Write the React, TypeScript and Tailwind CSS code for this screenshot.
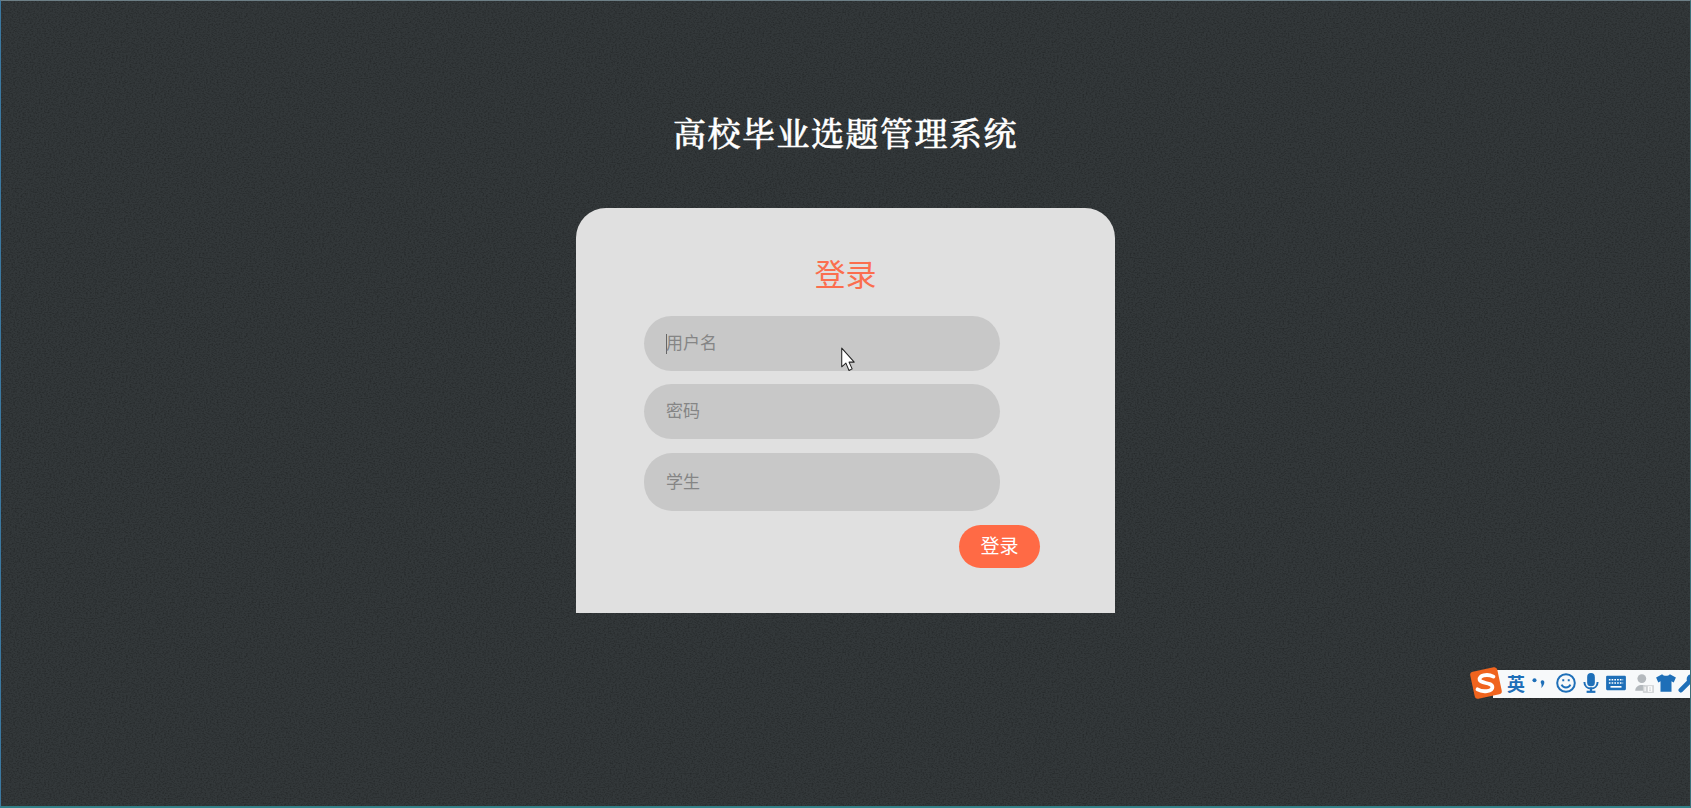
import React from 'react';

const fields = [
  { label: '用户名', height: 'h-[55px] mb-[-1px]', caret: true, shift: 'pt-0' },
  { label: '密码', height: 'h-[55px]', caret: false, shift: 'pt-0' },
  { label: '学生', height: 'h-[58px]', caret: false, shift: 'pt-[2px]' },
];

const Toolbar: React.FC = () => (
  <div className="absolute left-[1468px] top-[664px] flex h-[36px] w-[223px] items-center overflow-hidden">
    <div className="absolute left-[24px] top-[5px] h-[28px] w-[199px] bg-[#f7f9fa] shadow-sm" />
    <svg viewBox="0 0 32 32" className="relative h-[34px] w-[34px] shrink-0">
      <rect x="3" y="3" width="26" height="26" rx="3" fill="#f0641e" transform="rotate(-12 16 16)" />
      <path d="M23 10 C17 7 9 9 10 13 C11 17 22 15 22 20 C22 24 13 25 8 22" fill="none" stroke="#fff" strokeWidth="3.6" strokeLinecap="round" />
    </svg>
    <span className="relative ml-[4px] w-[20px] shrink-0 font-['Noto_Sans_CJK_SC',sans-serif] text-[18px] leading-none font-bold text-[#1e6fb8]">英</span>
    <svg viewBox="0 0 16 16" className="relative ml-[3px] h-[18px] w-[18px] shrink-0 text-[#1e6fb8]" fill="currentColor">
      <circle cx="4" cy="5.500" r="1.800" />
      <path d="M11 5.500 C13.500 5.500 13.500 9 10 12.500 C11 9 9.500 8 9.500 7 C9.500 6 10.500 5.500 11 5.500Z" />
    </svg>
    <svg viewBox="0 0 20 20" className="relative ml-[7px] h-[22px] w-[22px] shrink-0 text-[#1e6fb8]" fill="none" stroke="currentColor" strokeWidth="1.800">
      <circle cx="10" cy="10" r="8" />
      <path d="M6 11.500 C7.500 15 12.500 15 14 11.500" />
      <path d="M7.500 6.500 V8.500 M12.500 6.500 V8.500" />
    </svg>
    <svg viewBox="0 0 20 20" className="relative ml-[3px] h-[22px] w-[22px] shrink-0 text-[#1e6fb8]" fill="currentColor">
      <rect x="6.500" y="1" width="7" height="12" rx="3.500" />
      <path d="M4 9 C4 17 16 17 16 9" fill="none" stroke="currentColor" strokeWidth="1.800" />
      <rect x="9" y="14" width="2" height="4" />
      <rect x="6" y="17" width="8" height="2" />
    </svg>
    <svg viewBox="0 0 20 20" className="relative ml-[3px] h-[22px] w-[22px] shrink-0 text-[#1e6fb8]">
      <rect x="1" y="3.500" width="18" height="13" rx="1" fill="currentColor" />
      <path d="M3.500 7 H16.500 M3.500 10 H16.500" stroke="#fff" strokeWidth="1.500" strokeDasharray="1.500 1" />
      <path d="M5 13.500 H15" stroke="#fff" strokeWidth="1.500" />
    </svg>
    <svg viewBox="0 0 20 20" className="relative ml-[6px] h-[22px] w-[22px] shrink-0 text-[#b4b9bd]" fill="currentColor">
      <circle cx="8" cy="6" r="4" />
      <path d="M2 17 C2 10 14 10 14 17Z" />
      <rect x="9" y="12" width="10" height="7" fill="#cfd2d4" />
      <path d="M11 13.500 V17.500 M14 13.500 H17 V17.500 H14Z M14 15.500 H17" stroke="#fff" strokeWidth="1" fill="none" />
    </svg>
    <svg viewBox="0 0 20 20" className="relative ml-0 h-[22px] w-[22px] shrink-0 text-[#1e6fb8]" fill="currentColor">
      <path d="M6.500 2 C8 4 12 4 13.500 2 L19 5 L17 9.500 L15 8.500 V18 H5 V8.500 L3 9.500 L1 5Z" />
    </svg>
    <svg viewBox="0 0 20 20" className="relative ml-0 h-[22px] w-[22px] shrink-0 text-[#1e6fb8]" fill="currentColor">
      <path d="M18 5 L14.500 8 L12 6 L15 2.500 C11 1 8 4 9 8 L2 15 C1 16 1 17 2 18 C3 19 4 19 5 18 L12 11 C16 12 19 9 18 5Z" />
    </svg>
  </div>
);

const Cursor: React.FC = () => (
  <svg viewBox="0 0 16 24" className="absolute left-[839px] top-[346px] h-[25px] w-[17px]">
    <path d="M1.500 1 V19 L5.500 15.500 L8.500 22.500 L11.500 21 L8.500 14.500 H13.500Z" fill="#fff" stroke="#222" strokeWidth="1" strokeLinejoin="round" />
  </svg>
);

const App: React.FC = () => {
  return (
    <div className="relative flex h-screen w-full flex-col items-center overflow-hidden border-t border-r border-b-2 border-l border-t-[#6d7f86] border-r-[#3d6f78] border-b-[#2f7f86] border-l-[#3b78a0] bg-[#33383a]">
      <svg className="pointer-events-none absolute inset-0 h-full w-full opacity-25">
        <filter id="grain">
          <feTurbulence type="fractalNoise" baseFrequency="0.55 0.8" numOctaves="2" seed="4" />
          <feColorMatrix values="0 0 0 0 0  0 0 0 0 0  0 0 0 0 0  0 0 0 2.200 -0.900" />
        </filter>
        <rect width="100%" height="100%" filter="url(#grain)" />
      </svg>

      <h1 className="relative mt-[111px] font-['Liberation_Serif','Noto_Serif_CJK_SC','Noto_Sans_CJK_SC',serif] text-[33px] leading-[46px] font-medium tracking-[1.500px] text-white [-webkit-text-stroke:0.5px_#ffffff]">
        高校毕业选题管理系统
      </h1>

      <div className="relative mt-[50px] flex h-[405px] w-[539px] flex-col rounded-t-[30px] bg-[#e0e0e0] pt-[46px]">
        <h2 className="text-center font-['Liberation_Sans','Noto_Sans_CJK_SC',sans-serif] text-[31px] leading-[44px] text-[#fb6e4e]">
          登录
        </h2>
        <div className="mt-[18px] ml-[68px] flex w-[356px] flex-col gap-[14px]">
          {fields.map((field) => (
            <div
              key={field.label}
              className={`flex items-center rounded-[28px] bg-[#c8c8c8] pl-[22px] font-['Liberation_Sans','Noto_Sans_CJK_SC',sans-serif] text-[17px] text-[#858585] ${field.height} ${field.shift}`}
            >
              {field.caret && <span className="mr-[-1px] h-[20px] w-px bg-[#666]" />}
              {field.label}
            </div>
          ))}
        </div>
        <button className="mt-[14px] ml-[383px] h-[43px] w-[81px] rounded-[22px] bg-[#ff6a45] pt-[2px] font-['Liberation_Sans','Noto_Sans_CJK_SC',sans-serif] text-[19px] text-white">
          登录
        </button>
      </div>

      <Cursor />
      <Toolbar />
    </div>
  );
};

export default App;
